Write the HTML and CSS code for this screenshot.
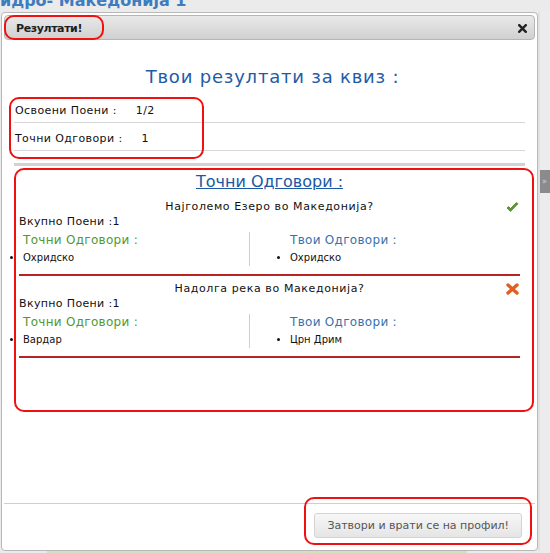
FILE: index.html
```html
<!DOCTYPE html>
<html lang="mk">
<head>
<meta charset="utf-8">
<title>Резултати</title>
<link rel="stylesheet" href="styles.css">
</head>
<body>
<div class="page">
  <div class="bg-title">идро- Македонија 1</div>
  <div class="main">
    <div class="dialog">
      <div class="titlebar">
        <span class="title">Резултати!</span>
        <svg class="close" width="9" height="9" viewBox="0 0 9 9"><path d="M1.2 1.2 L7.8 7.8 M7.8 1.2 L1.2 7.8" stroke="#222" stroke-width="2.4" stroke-linecap="square"/></svg>
      </div>
      <div class="content">
        <h2 class="heading">Твои резултати за квиз :</h2>
        <div class="stat"><span class="label">Освоени Поени :</span><span class="val">1/2</span></div>
        <div class="stat"><span class="label">Точни Одговори :</span><span class="val">1</span></div>
        <div class="sep"></div>
        <div class="results">
          <h3 class="res-heading"><span>Точни Одговори :</span></h3>
          <div class="item">
            <div class="q">
              <span class="q-text">Најголемо Езеро во Македонија?</span>
              <svg class="icon" width="13" height="11" viewBox="0 0 13 11"><path d="M1 6 L4.5 9.5 L12 1.8 L10.3 0.6 L4.5 6.6 L2.6 4.5 Z" fill="#5d9b2c" stroke="#3f7a1b" stroke-width="0.7" stroke-linejoin="round"/></svg>
            </div>
            <div class="pts">Вкупно Поени :1</div>
            <div class="cols">
              <div class="col col-left">
                <div class="col-head green">Точни Одговори :</div>
                <ul><li>Охридско</li></ul>
              </div>
              <div class="col col-right">
                <div class="col-head blue">Твои Одговори :</div>
                <ul><li>Охридско</li></ul>
              </div>
            </div>
          </div>
          <div class="item">
            <div class="q">
              <span class="q-text">Надолга река во Македонија?</span>
              <svg class="icon" width="13" height="12" viewBox="0 0 13 12"><path d="M2 2 L11 10 M11 2 L2 10" stroke="#e2601f" stroke-width="3.4" stroke-linecap="round"/></svg>
            </div>
            <div class="pts">Вкупно Поени :1</div>
            <div class="cols">
              <div class="col col-left">
                <div class="col-head green">Точни Одговори :</div>
                <ul><li>Вардар</li></ul>
              </div>
              <div class="col col-right">
                <div class="col-head blue">Твои Одговори :</div>
                <ul><li>Црн Дрим</li></ul>
              </div>
            </div>
          </div>
        </div>
      </div>
      <div class="buttonpane">
        <button class="btn" type="button">Затвори и врати се на профил!</button>
      </div>
    </div>
    <div class="side"><div class="side-tab">»</div></div>
  </div>
  <div class="bottom-strip"></div>

  <div class="ann ann-title"></div>
  <div class="ann ann-stats"></div>
  <div class="ann ann-results"></div>
  <div class="ann ann-button"></div>
</div>
</body>
</html>
```

FILE: styles.css
```css
html, body {
  margin: 0;
  padding: 0;
}
body {
  font-family: "DejaVu Sans", Verdana, sans-serif;
  background: #ebebeb;
}
.page {
  position: relative;
  width: 550px;
  height: 553px;
  overflow: hidden;
  display: flex;
  flex-direction: column;
  background: #ebebeb;
}
.bg-title {
  height: 18px;
  margin-top: -6px;
  line-height: 14px;
  font-size: 16px;
  font-weight: bold;
  color: #3d7cc0;
  white-space: nowrap;
  flex: none;
}
.main {
  display: flex;
  flex: none;
}
.dialog {
  flex: none;
  margin-left: 1px;
  width: 537px;
  height: 539px;
  box-sizing: border-box;
  border: 1px solid #b8b8b8;
  border-radius: 4px;
  background: #fff;
  padding: 2px;
  display: flex;
  flex-direction: column;
}
.titlebar {
  height: 25px;
  box-sizing: border-box;
  border: 1px solid #b5b5b5;
  border-radius: 4px;
  background: linear-gradient(#e9e9e9, #d0d0d0);
  display: flex;
  align-items: center;
  justify-content: space-between;
  padding: 1px 7px 0 11px;
  flex: none;
}
.title {
  font-size: 11px;
  font-weight: bold;
  letter-spacing: -0.4px;
  color: #1e1e1e;
}
.close {
  display: block;
}
.content {
  flex: 1;
  padding: 0 10px;
}
.heading {
  margin: 26px 0 7px;
  padding-left: 6px;
  font-size: 18px;
  line-height: 22px;
  font-weight: normal;
  letter-spacing: 0.8px;
  color: #1d5ca6;
  text-align: center;
}
.stat {
  font-size: 11px;
  line-height: 14px;
  letter-spacing: 0.4px;
  padding: 9px 0 4px 1px;
  border-bottom: 1px solid #d8d8d8;
  color: #111;
}
.val {
  margin-left: 19px;
}
.sep {
  margin-top: 12px;
  height: 3px;
  background: #d2d2d2;
}
.results {
  margin: 0 5px;
}
.res-heading {
  margin: 6px 0 2px;
  font-size: 16px;
  line-height: 20px;
  font-weight: normal;
  text-align: center;
  color: #1a58a3;
}
.res-heading span {
  text-decoration: underline;
}
.item {
  padding-top: 6px;
  padding-bottom: 8px;
  border-bottom: 2px solid #b52424;
}
.q {
  display: grid;
  grid-template-columns: 1fr auto 1fr;
  align-items: center;
  font-size: 11px;
  line-height: 14px;
  letter-spacing: 0.6px;
  color: #111;
}
.q-text {
  grid-column: 2;
}
.icon {
  grid-column: 3;
  justify-self: end;
  margin-right: 1px;
}
.pts {
  margin-top: 1px;
  font-size: 11px;
  line-height: 14px;
  letter-spacing: 0.35px;
  color: #111;
}
.cols {
  margin-top: 3px;
  display: grid;
  grid-template-columns: 230px 1fr;
}
.col {
  padding-bottom: 1px;
}
.col-left {
  padding-left: 4px;
}
.col-right {
  padding-left: 40px;
  border-left: 1px solid #cfcfcf;
}
.col-head {
  font-size: 12px;
  line-height: 16px;
  letter-spacing: 0.3px;
}
.green {
  color: #4e9a2f;
}
.blue {
  color: #3872ad;
}
.col ul {
  margin: 3px 0 0;
  padding: 0;
  font-size: 10px;
  line-height: 14px;
  color: #111;
}
.buttonpane {
  flex: none;
  border-top: 1px solid #cfcfcf;
  padding: 9px 13px 10px;
  display: flex;
  justify-content: flex-end;
}
.btn {
  height: 25px;
  padding: 0 12px;
  border: 1px solid #d3d3d3;
  border-radius: 3px;
  background: linear-gradient(#f7f7f7, #e5e5e5);
  color: #555;
  font-family: "DejaVu Sans", Verdana, sans-serif;
  font-size: 11px;
}
.side {
  flex: 1;
  min-width: 0;
  background: linear-gradient(90deg, #e2e2e2 0, #e2e2e2 2px, #ececec 2px);
}
.side-tab {
  margin-top: 158px;
  margin-left: 2px;
  height: 23px;
  padding-left: 2px;
  background: #8b8b8b;
  color: #d4d4d4;
  font-size: 8px;
  line-height: 23px;
  white-space: nowrap;
}
.bottom-strip {
  margin-left: 47px;
  width: 420px;
  height: 2px;
  background: #d4dfc2;
}
.ann {
  position: absolute;
  box-sizing: border-box;
  border: 2px solid #f01010;
  border-radius: 10px;
}
.ann-title {
  left: 4px;
  top: 15px;
  width: 100px;
  height: 25px;
}
.ann-stats {
  left: 9px;
  top: 97px;
  width: 195px;
  height: 62px;
}
.ann-results {
  left: 14px;
  top: 168px;
  width: 520px;
  height: 244px;
}
.ann-button {
  left: 304px;
  top: 497px;
  width: 228px;
  height: 48px;
}
```
